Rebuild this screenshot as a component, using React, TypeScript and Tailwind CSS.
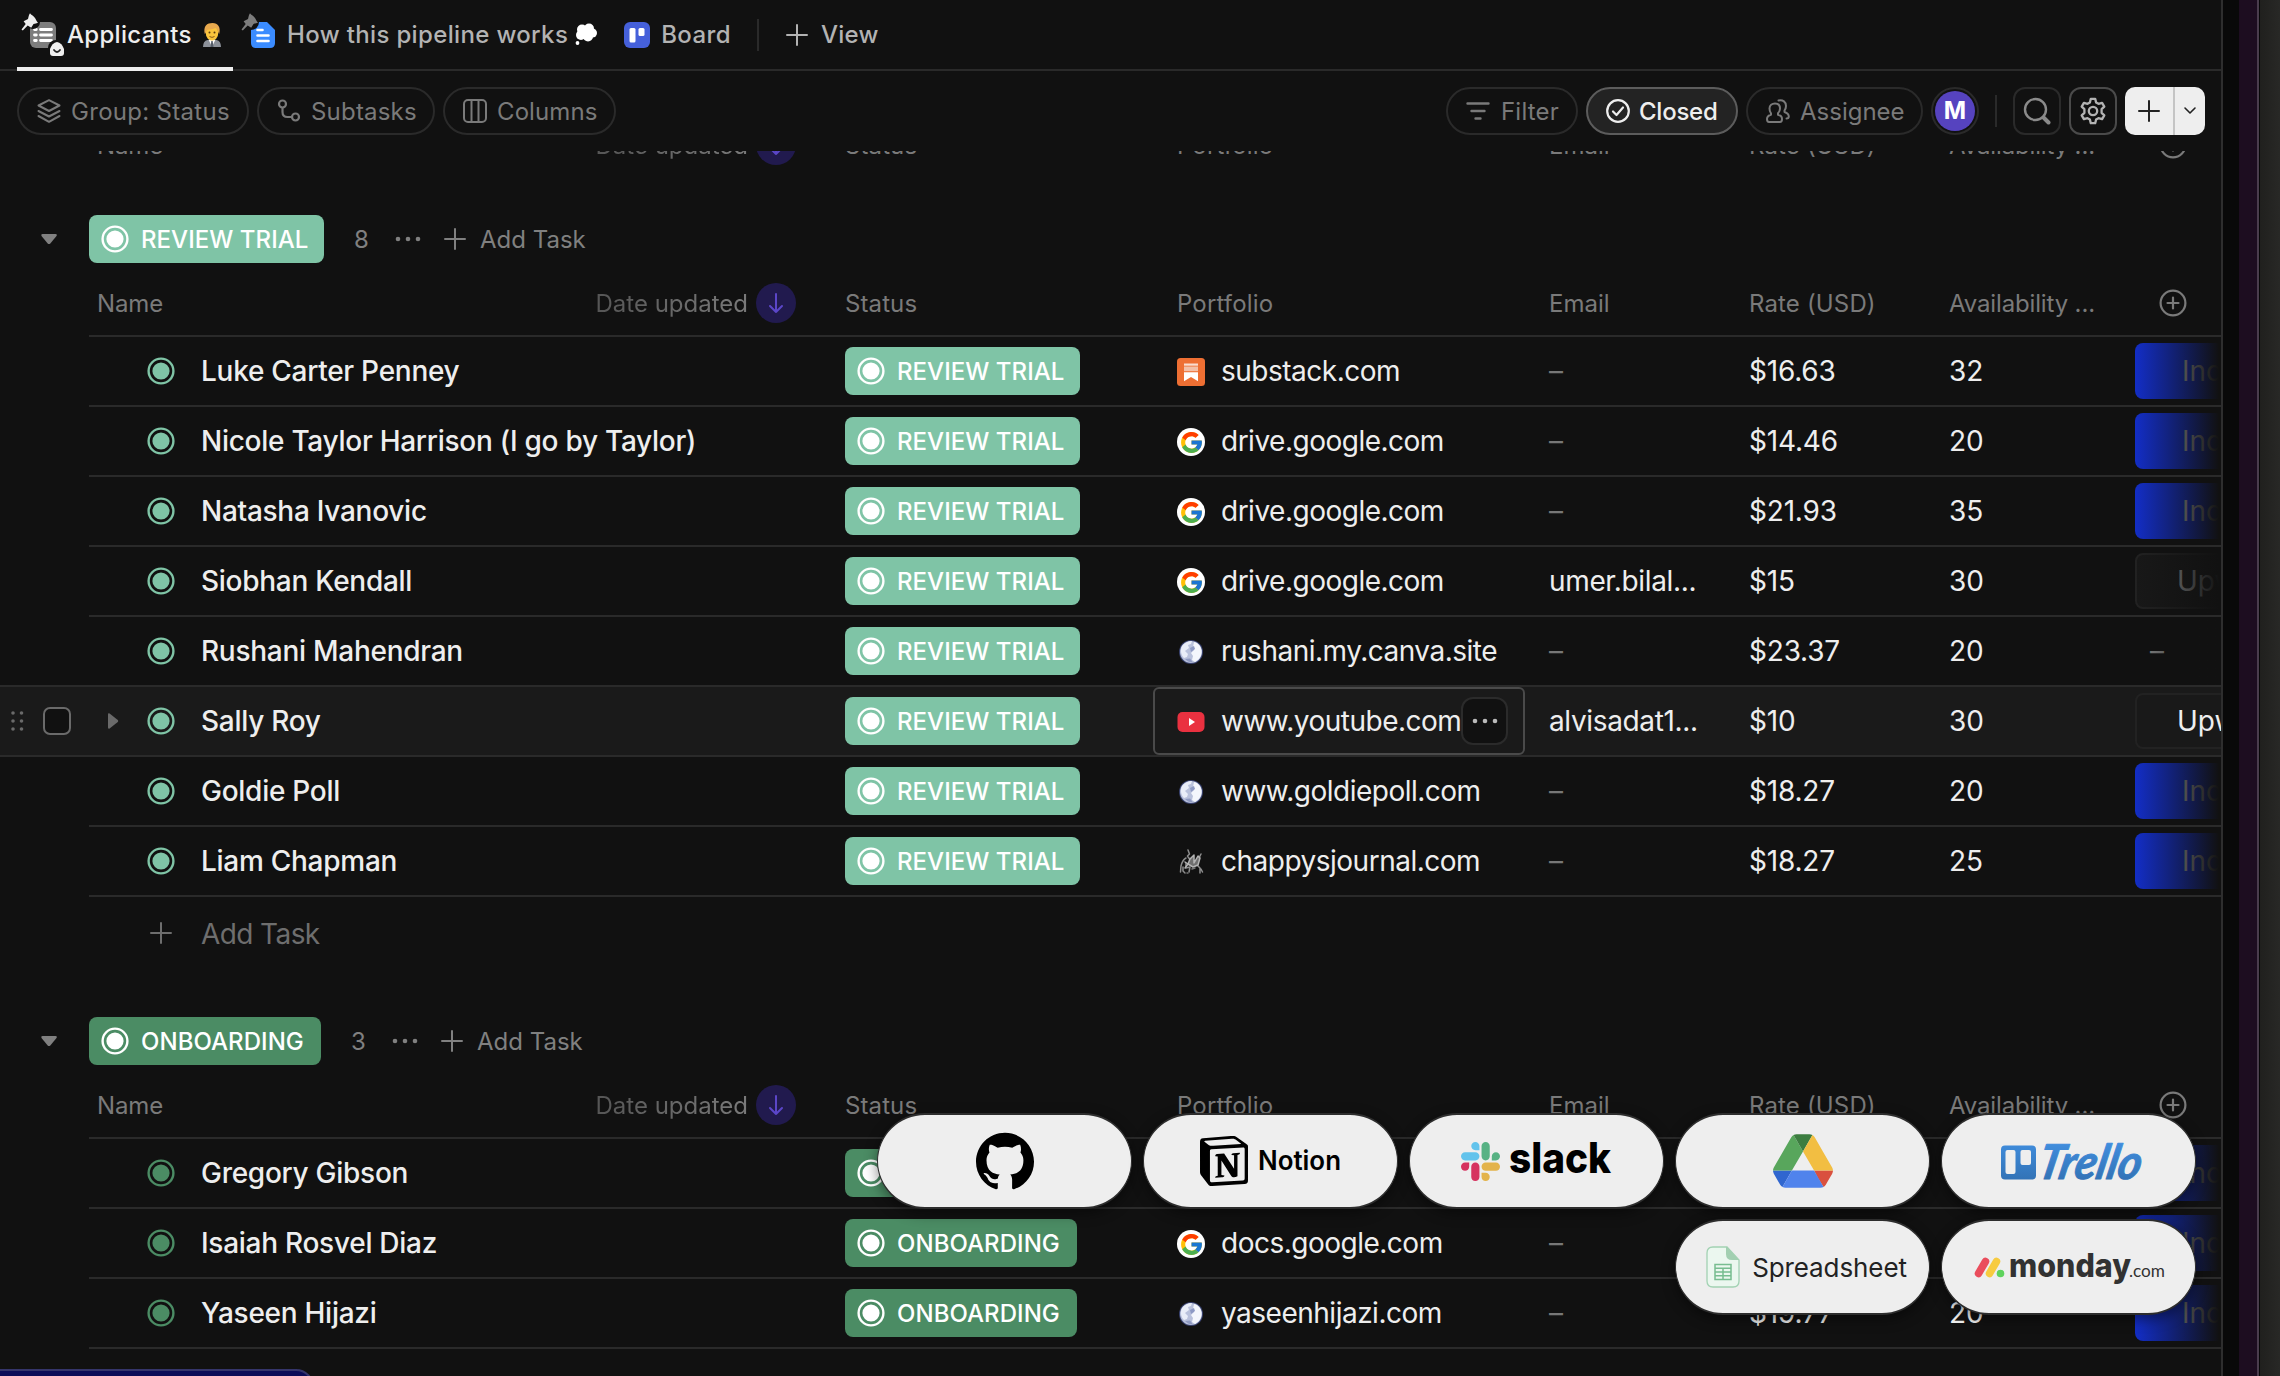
import React from "react";
import { FcGoogle } from "react-icons/fc";
import { SiGithub, SiNotion } from "react-icons/si";

const StatusDot = ({ className = "" }: { className?: string }) => (
  <svg viewBox="0 0 28 28" className={"size-7 shrink-0 " + className}>
    <circle cx="14" cy="14" r="12.4" fill="none" stroke="currentColor" strokeWidth="2.4" />
    <circle cx="14" cy="14" r="8.6" fill="currentColor" />
  </svg>
);

const Plus = ({ className = "" }: { className?: string }) => (
  <svg viewBox="0 0 24 24" className={"size-6 shrink-0 " + className} fill="none" stroke="currentColor" strokeWidth="2" strokeLinecap="round">
    <path d="M12 2v20M2 12h20" />
  </svg>
);

const Dots = ({ className = "" }: { className?: string }) => (
  <svg viewBox="0 0 26 8" className={"h-2 w-[26px] shrink-0 " + className} fill="currentColor">
    <circle cx="3" cy="4" r="2.3" />
    <circle cx="13" cy="4" r="2.3" />
    <circle cx="23" cy="4" r="2.3" />
  </svg>
);

const Pin = ({ className = "" }: { className?: string }) => (
  <svg viewBox="0 0 18 18" className={"absolute size-[18px] " + className} fill="currentColor">
    <path d="M9 0.3c1.2 1.8 3.2 2.4 4.6 4.1s1.800 3.600 3.400 5.300c-1.400.6-3 .7-4.500 1.300L10.200 14.800 6.700 12.600 1.800 17.600 0.500 16.500 4.700 11.100 2.600 8.200 7 5.900C7.500 4.200 7.800 2 9 .3Z" />
  </svg>
);

function Globe() {
  return (
    <svg viewBox="0 0 28 28" className="size-7">
      <circle cx="14" cy="14" r="12" fill="#39426f" />
      <circle cx="14" cy="14" r="11" fill="#b9c1dc" />
      <path d="M5 8c2-3 6-5 10-5l-1 3-3 1 1 3-4 3 3 3-1 3-3 1C4 17 3 12 5 8Z" fill="#e9edf8" />
      <path d="M17 4c4 1 7 4 7.500 8.500.2 3-.5 6-2.500 8.500l-4 3-3-2 1-4-2-3 3-3-1-3Z" fill="#f4f6fc" />
      <path d="M8 21c2 2.500 5 3.500 8 3.500l-3-4Z" fill="#8f9ac2" />
      <path d="M13 10l4-2 1 3-4 3Z" fill="#8d99c4" />
    </svg>
  );
}

function Favicon({ kind }: { kind: string }) {
  if (kind === "google")
    return (
      <span className="flex size-7 items-center justify-center rounded-full bg-white">
        <FcGoogle size={25} />
      </span>
    );
  if (kind === "substack")
    return (
      <svg viewBox="0 0 28 28" className="size-7">
        <rect width="28" height="28" rx="3.500" fill="#ee6f33" />
        <path d="M7 5.500h14v2.200H7z" fill="#f9ddd0" />
        <path d="M7 8.500h14v4.700H7z" fill="#f3c0a8" />
        <path d="M7 14.200h14v9L14 19l-7 4.200z" fill="#fff" />
      </svg>
    );
  if (kind === "youtube")
    return (
      <svg viewBox="0 0 28 28" className="size-7">
        <rect x="0.500" y="4" width="27" height="20" rx="5" fill="#ea3140" />
        <path d="M12 10l6 4-6 4z" fill="#fff" />
      </svg>
    );
  if (kind === "figure")
    return (
      <svg viewBox="0 0 28 28" className="size-7" fill="none" stroke="#8d8d8d" strokeWidth="1.500" strokeLinecap="round" strokeLinejoin="round">
        <path d="M11 2l1.500 4-2 2 2 3M9 10c-2 1-4 4-5 8l-.5 6M24 6l-2 4M6 19v4l2 2M9 20l4-1-1 5M20 17l3 3v5M24 21l1.500 3" />
        <path d="M13 11l4-4v8l4-7 2 2-2 7-5 2-5-3ZM8 14l3 2-3 4" fill="#6f6f6f" stroke="#b4b4b4" />
        <path d="M15 21l3-1M10 25h1" stroke="#777" />
      </svg>
    );
  return <Globe />;
}

type Row = {
  name: string;
  icon?: string;
  site?: string;
  email?: string;
  rate: string;
  hours: string;
  source: "Ind" | "Upw" | "";
  hover?: boolean;
  fullLine?: boolean;
};

const reviewRows: Row[] = [
  { name: "Luke Carter Penney", icon: "substack", site: "substack.com", rate: "$16.63", hours: "32", source: "Ind" },
  { name: "Nicole Taylor Harrison (I go by Taylor)", icon: "google", site: "drive.google.com", rate: "$14.46", hours: "20", source: "Ind" },
  { name: "Natasha Ivanovic", icon: "google", site: "drive.google.com", rate: "$21.93", hours: "35", source: "Ind" },
  { name: "Siobhan Kendall", icon: "google", site: "drive.google.com", email: "umer.bilal...", rate: "$15", hours: "30", source: "Upw" },
  { name: "Rushani Mahendran", icon: "globe", site: "rushani.my.canva.site", rate: "$23.37", hours: "20", source: "", fullLine: true },
  { name: "Sally Roy", icon: "youtube", site: "www.youtube.com", email: "alvisadat1...", rate: "$10", hours: "30", source: "Upw", hover: true, fullLine: true },
  { name: "Goldie Poll", icon: "globe", site: "www.goldiepoll.com", rate: "$18.27", hours: "20", source: "Ind" },
  { name: "Liam Chapman", icon: "figure", site: "chappysjournal.com", rate: "$18.27", hours: "25", source: "Ind" },
];

const onboardingRows: Row[] = [
  { name: "Gregory Gibson", rate: "", hours: "", source: "Ind" },
  { name: "Isaiah Rosvel Diaz", icon: "google", site: "docs.google.com", rate: "", hours: "", source: "Ind" },
  { name: "Yaseen Hijazi", icon: "globe", site: "yaseenhijazi.com", rate: "$19.77", hours: "20", source: "Ind" },
];

const tones = {
  review: { label: "REVIEW TRIAL", bg: "bg-[#7fc4a6]", text: "text-[#7fc4a6]", width: "w-[235px]", track: "tracking-[0.05px]" },
  onboarding: { label: "ONBOARDING", bg: "bg-[#4b8c64]", text: "text-[#4b8c64]", width: "w-[232px]", track: "tracking-[0.05px]" },
};
type Tone = keyof typeof tones;

const Badge = ({ tone }: { tone: Tone }) => {
  const t = tones[tone];
  return (
    <div className={`flex h-12 shrink-0 items-center rounded-lg pl-3 text-white ${t.bg} ${t.width}`}>
      <StatusDot />
      <span className={`ml-3 pt-0.5 text-2xl font-medium whitespace-nowrap ${t.track}`}>{t.label}</span>
    </div>
  );
};

const ColumnHeader = () => (
  <div className="ml-[89px] flex h-16 items-center text-2xl leading-[34px] text-[#7a7a7a]">
    <div className="flex w-[756px] items-center pr-[49px] pl-2">
      <span className="pt-0.5 tracking-[-0.1px]">Name</span>
      <span className="ml-auto bg-gradient-to-r from-[#555] to-[#7a7a7a] bg-clip-text pt-0.5 text-transparent">Date updated</span>
      <span className="ml-2 flex size-10 items-center justify-center rounded-full bg-[#211a4e]">
        <svg viewBox="0 0 20 24" className="h-6 w-5" fill="none" stroke="#5b46c8" strokeWidth="2" strokeLinecap="round" strokeLinejoin="round">
          <path d="M10 3v18M4 15l6 6 6-6" />
        </svg>
      </span>
    </div>
    <span className="w-[332px] pt-0.5 tracking-[0.1px]">Status</span>
    <span className="w-[372px] pt-0.5 tracking-[0.15px]">Portfolio</span>
    <span className="w-[200px] pt-0.5">Email</span>
    <span className="w-[200px] pt-0.5 tracking-[0.15px]">Rate (USD)</span>
    <span className="w-[210px] pt-0.5 tracking-[-0.15px] whitespace-nowrap">Availability ...</span>
    <svg viewBox="0 0 28 28" className="size-7" fill="none" stroke="#7a7a7a" strokeWidth="2.200" strokeLinecap="round">
      <circle cx="14" cy="14" r="12.400" />
      <path d="M14 8.500v11M8.500 14h11" />
    </svg>
  </div>
);

const Source = ({ row }: { row: Row }) => (
  <div className="relative flex h-full w-24 items-center overflow-hidden pl-2.5">
    {row.source === "Ind" && <div className="h-14 w-40 shrink-0 rounded-lg bg-[#1331dc] pl-[47px] text-[28px] leading-14 text-[#b9b9b9]">Ind</div>}
    {row.source === "Upw" && (
      <div className={`h-14 w-40 shrink-0 rounded-lg border-2 bg-[#191919] pl-10 text-[28px] leading-[52px] ${row.hover ? "border-[#222] text-[#eee]" : "border-[#242424] text-[#aaa]"}`}>Upw</div>
    )}
    {row.source === "" && <span className="pl-[15px] text-[#999]">–</span>}
    {!row.hover && <div className="absolute inset-y-0 right-0 left-0 bg-gradient-to-r from-transparent to-[#111] to-98%" />}
  </div>
);

const TaskRow = ({ row, tone }: { row: Row; tone: Tone }) => (
  <div className={`h-[70px] ${row.fullLine ? "" : "pl-[89px]"} ${row.hover ? "bg-[#1a1a1a]" : ""}`}>
    <div className="flex h-full items-center border-b-2 border-[#2a2a2a] text-[28px] text-[#eeeeee]">
      {row.fullLine && (
        <div className="flex w-[89px] shrink-0 items-center pl-[11px]">
          {row.hover && (
            <>
              <svg viewBox="0 0 14 22" className="h-[22px] w-3.5" fill="#6a6a6a">
                {[3, 11, 19].map((y) => (
                  <g key={y}>
                    <circle cx="2" cy={y} r="1.800" />
                    <circle cx="10.500" cy={y} r="1.800" />
                  </g>
                ))}
              </svg>
              <span className="ml-[18px] size-7 rounded-[7px] border-2 border-[#6a6a6a] bg-[#111]" />
            </>
          )}
        </div>
      )}
      <div className="flex w-[756px] shrink-0 items-center">
        <div className="flex w-[58px] items-center pl-[18px]">
          {row.hover && (
            <svg viewBox="0 0 12 18" className="h-[18px] w-3" fill="#6a6a6a">
              <path d="M1 2.500Q1 .8 2.600 1.600L10.800 8q.9 1 0 2l-8.200 6.400Q1 17.200 1 15.500Z" />
            </svg>
          )}
        </div>
        <StatusDot className={tones[tone].text} />
        <span className="ml-[26px] font-medium tracking-[-0.27px] whitespace-nowrap">{row.name}</span>
      </div>
      <div className="w-[308px] shrink-0">
        <Badge tone={tone} />
      </div>
      <div className={`flex h-[68px] w-[372px] shrink-0 items-center rounded-md border-2 pl-[22px] ${row.hover ? "border-[#4a4a4a]" : "border-transparent"}`}>
        {row.site && (
          <>
            <span className="mt-0.5 shrink-0">
              <Favicon kind={row.icon ?? "globe"} />
            </span>
            <span className="ml-4 tracking-[-0.5px] whitespace-nowrap">{row.site}</span>
          </>
        )}
        {row.hover && (
          <span className="mr-[15px] ml-auto flex h-12 w-[47px] shrink-0 items-center justify-center rounded-xl border-2 border-[#2b2b2b] bg-[#111] text-[#bbb]">
            <Dots />
          </span>
        )}
      </div>
      <div className="w-[200px] shrink-0 pl-6 tracking-[-0.35px]">{row.email ?? <span className="text-[#777]">–</span>}</div>
      <div className="w-[200px] shrink-0 pl-6 tracking-[-0.2px]">{row.rate}</div>
      <div className="w-[200px] shrink-0 pl-6">{row.hours}</div>
      <Source row={row} />
    </div>
  </div>
);

const Group = ({ tone, rows, count }: { tone: Tone; rows: Row[]; count: string }) => (
  <section>
    <div className="flex h-12 items-center pl-10 text-2xl text-[#808080]">
      <svg viewBox="0 0 18 12" className="mr-[31px] h-3 w-[18px]" fill="#808080">
        <path d="M2.500 1h13q2 .2 1 2L10.300 10.500q-1.300 1-2.600 0L1.500 3Q.6 1.200 2.500 1Z" />
      </svg>
      <Badge tone={tone} />
      <span className="ml-[30px] w-4 pt-0.5">{count}</span>
      <Dots className="ml-[25px]" />
      <Plus className="ml-[22px]" />
      <span className="ml-[13px] pt-0.5">Add Task</span>
    </div>
    <div className="mt-2">
      <ColumnHeader />
    </div>
    <div className="ml-[89px] h-0.5 bg-[#2a2a2a]" />
    {rows.map((r) => (
      <TaskRow key={r.name} row={r} tone={tone} />
    ))}
  </section>
);

const Chip = ({ children, className }: { children: React.ReactNode; className: string }) => (
  <div className={`flex h-12 shrink-0 items-center rounded-full border-2 text-2xl whitespace-nowrap ${className}`}>{children}</div>
);

const Logo = ({ children }: { children: React.ReactNode }) => (
  <div className="flex h-24 w-[255px] items-center justify-center rounded-full border border-y-2 border-[#2d2d2d] bg-[#eeeeee] shadow-[0_4px_14px_rgba(0,0,0,0.450)]">{children}</div>
);

const TabBar = () => (
  <nav className="flex h-[71px] shrink-0 items-center border-b-2 border-[#2a2a2a] text-2xl font-medium tracking-[0.3px] text-[#b3b3b3]">
    <div className="relative ml-[17px] flex h-full w-[216px] items-center pl-[13px] text-[#eeeeee]">
      <span className="absolute inset-x-0 -bottom-0.5 h-1 bg-[#eeeeee]" />
      <span className="relative flex h-[26px] w-[26px] shrink-0">
        <svg viewBox="0 0 26 26" className="size-[26px]">
          <rect width="26" height="26" rx="6" fill="#7d7d7d" />
          <path d="M10.500 7.500h11M10.500 13h11M10.500 18.500h11M4.500 7.500h1.800M4.500 13h1.800M4.500 18.500h1.800" stroke="#fff" strokeWidth="2.800" strokeLinecap="round" />
          <circle cx="3" cy="0" r="7" fill="#111" />
          <circle cx="26" cy="26" r="8" fill="#111" />
        </svg>
        <Pin className="-top-[9px] -left-[9px] text-[#eee]" />
        <svg viewBox="0 0 14 14" className="absolute top-5 left-5 size-3.5">
          <path d="M7 0q5 1 7 7v4q0 3-3 3H3q-3 0-3-3V7q2-6 7-7Z" fill="#eee" />
          <path d="M4 8q3 4 6 0" stroke="#222" strokeWidth="1.800" fill="none" strokeLinecap="round" />
        </svg>
      </span>
      <span className="ml-[11px]">Applicants</span>
      <svg viewBox="0 0 18 24" className="mr-[12px] ml-auto h-6 w-[18px]">
        <path d="M0 24q0-6 4.500-7h9q4.500 1 4.500 7Z" fill="#8c9199" />
        <path d="M5.500 16.500 9 24l3.500-7.500Z" fill="#fff" />
        <path d="M8.300 18h1.400l.8 6H7.500Z" fill="#555d68" />
        <ellipse cx="9" cy="9.500" rx="6.300" ry="8" fill="#fbc53c" />
        <path d="M1.800 11C0 3 4 0 9.500 0S18 4 16.200 11C15 9 15 6.500 12.500 5 9 7 5 6 3.600 7.500 3 9 3 10 1.800 11Z" fill="#e8a94e" />
        <circle cx="6.500" cy="9.500" r="1" fill="#5b3c12" />
        <circle cx="11.500" cy="9.500" r="1" fill="#5b3c12" />
        <path d="M6.500 13.500q2.500 1.800 5 0" stroke="#8a5a14" strokeWidth="1" fill="none" />
      </svg>
    </div>
    <div className="flex items-center pl-[18px]">
      <span className="relative flex h-[26px] w-6">
        <svg viewBox="0 0 24 26" className="h-[26px] w-6">
          <path d="M5 0h11l8 8v13q0 5-5 5H5q-5 0-5-5V5q0-5 5-5Z" fill="#3b8cff" />
          <path d="M6.500 8h5M6.500 13.500h11M6.500 19h11" stroke="#fff" strokeWidth="2.600" strokeLinecap="round" />
          <circle cx="0" cy="0" r="8" fill="#111" />
        </svg>
        <Pin className="-top-[9px] -left-[10px] text-[#7d7d7d]" />
      </span>
      <span className="ml-3 tracking-[0.35px] whitespace-nowrap">How this pipeline works</span>
      <svg viewBox="0 0 24 24" className="ml-1.5 size-6" fill="#fff">
        <circle cx="8" cy="6.500" r="5" />
        <circle cx="15" cy="5.500" r="5" />
        <circle cx="18.500" cy="10" r="4.500" />
        <circle cx="7" cy="12" r="5" />
        <circle cx="14" cy="13.500" r="5" />
        <circle cx="12" cy="9" r="5" />
        <circle cx="3.500" cy="20" r="1.900" />
      </svg>
    </div>
    <div className="ml-[26px] flex items-center">
      <svg viewBox="0 0 26 26" className="size-[26px]">
        <rect width="26" height="26" rx="6" fill="#4560da" />
        <rect x="5.500" y="6" width="6" height="14.500" rx="1.500" fill="#fff" />
        <rect x="14.500" y="6" width="6" height="8" rx="1.500" fill="#fff" />
      </svg>
      <span className="ml-[11px] tracking-[0.4px]">Board</span>
    </div>
    <span className="ml-[26px] h-8 w-0.5 bg-[#2a2a2a]" />
    <Plus className="ml-[26px]" />
    <span className="ml-3">View</span>
  </nav>
);

const Toolbar = () => (
  <div className="flex h-20 shrink-0 items-start pt-4 text-[#7a7a7a]">
    <Chip className="ml-[17px] w-[232px] border-[#2a2a2a] pl-[18px]">
      <svg viewBox="0 0 24 24" className="size-6" fill="none" stroke="currentColor" strokeWidth="2" strokeLinejoin="round" strokeLinecap="round">
        <path d="M12 1.200 22.500 6.500 12 12 1.500 6.500ZM1.500 12 12 17.500 22.500 12M1.500 17 12 22.800 22.500 17" />
      </svg>
      <span className="ml-2.5 pt-0.5 tracking-[0.3px]">Group: Status</span>
    </Chip>
    <Chip className="ml-2 w-[178px] border-[#2a2a2a] pl-[18px]">
      <svg viewBox="0 0 24 24" className="size-6" fill="none" stroke="currentColor" strokeWidth="2.200">
        <circle cx="5.500" cy="5" r="3.500" />
        <circle cx="18.500" cy="18" r="3.500" />
        <path d="M5.500 8.500V13q0 5 5 5H15" />
      </svg>
      <span className="ml-2.5 pt-0.5 tracking-[0.2px]">Subtasks</span>
    </Chip>
    <Chip className="ml-2 w-[173px] border-[#2a2a2a] pl-[18px]">
      <svg viewBox="0 0 24 24" className="size-6" fill="none" stroke="currentColor" strokeWidth="2">
        <rect x="1" y="1" width="22" height="22" rx="4" />
        <path d="M8.500 1v22M15.500 1v22" />
      </svg>
      <span className="ml-2.5 pt-0.5 tracking-[0.1px]">Columns</span>
    </Chip>
    <Chip className="ml-auto w-[132px] border-[#2a2a2a] pl-[18px]">
      <svg viewBox="0 0 24 24" className="size-6" fill="none" stroke="currentColor" strokeWidth="2.400" strokeLinecap="round">
        <path d="M1.500 4.500h21M5.500 12h13M9.500 19.500h5" />
      </svg>
      <span className="ml-[11px] pt-0.5 tracking-[0.2px]">Filter</span>
    </Chip>
    <Chip className="ml-2 w-[152px] border-[#5c5c5c] bg-[#232323] pl-[18px] font-medium text-[#eee]">
      <svg viewBox="0 0 24 24" className="size-6" fill="none" stroke="currentColor" strokeWidth="2.200" strokeLinecap="round" strokeLinejoin="round">
        <circle cx="12" cy="12" r="10.800" />
        <path d="m7 12.500 3.500 3.500L17 8.500" />
      </svg>
      <span className="ml-[9px] pt-0.5 tracking-[-0.25px]">Closed</span>
    </Chip>
    <Chip className="ml-2 w-[177px] border-[#2a2a2a] pl-[18px]">
      <svg viewBox="0 0 24 24" className="size-6" fill="none" stroke="currentColor" strokeWidth="2" strokeLinecap="round" strokeLinejoin="round">
        <path d="M9 4.500c3 0 5 2 5 5 0 2-.8 3.600-2 4.800v1.500c2.500.6 4 1.700 4 4.200q0 3-2 3H3q-2 0-2-3c0-2.500 2-3.600 4-4.200v-1.500C4 13 3.500 11.500 3.500 9.500c0-3 2.500-5 5.500-5Z" />
        <path d="M12.500 1.500C17 .5 20 3 20 7c0 2-.5 3-1.500 4.500v1.500c2.500.8 4.300 1.800 4.300 4.500 0 1.500-.8 2-2.300 2" />
      </svg>
      <span className="ml-2.5 pt-0.5">Assignee</span>
    </Chip>
    <span className="ml-2 flex size-12 items-center justify-center rounded-full border-2 border-[#2a2a2a]">
      <span className="flex size-10 shrink-0 items-center justify-center rounded-full bg-[#5643bf] text-2xl font-bold text-white">M</span>
    </span>
    <span className="mt-2 ml-4 h-8 w-0.5 bg-[#2a2a2a]" />
    <span className="ml-4 flex size-12 items-center justify-center rounded-xl border-2 border-[#2a2a2a]">
      <svg viewBox="0 0 28 28" className="size-7" fill="none" stroke="#8a8a8a" strokeWidth="2.400" strokeLinecap="round">
        <circle cx="12.500" cy="12.500" r="10.500" />
        <path d="m20.500 20.500 5 5" strokeWidth="4" />
      </svg>
    </span>
    <span className="ml-2 flex size-12 items-center justify-center rounded-xl border-2 border-[#4a4a4a]">
      <svg viewBox="0 0 28 28" className="size-7" fill="none" stroke="#b3b3b3" strokeWidth="2.300" strokeLinejoin="round">
        <circle cx="14" cy="14" r="4.200" />
        <path d="M11.800 1.800h4.400l.9 3.600 2.400 1.400 3.600-1 2.200 3.800-2.700 2.600v3.600l2.700 2.600-2.200 3.800-3.600-1-2.400 1.400-.9 3.600h-4.400l-.9-3.600-2.400-1.400-3.600 1-2.200-3.800 2.700-2.600v-3.600L2.700 9.600l2.200-3.800 3.600 1 2.400-1.400Z" />
      </svg>
    </span>
    <span className="mr-4 ml-2 flex h-12 w-20 items-center overflow-hidden rounded-[10px] bg-[#eee] text-[#222]">
      <span className="flex h-full w-[50px] items-center justify-center border-r-2 border-[#c4c4c4]">
        <Plus />
      </span>
      <svg viewBox="0 0 14 10" className="ml-2 h-2.5 w-3.5" fill="none" stroke="currentColor" strokeWidth="1.600" strokeLinecap="round" strokeLinejoin="round">
        <path d="m2 2 5 5 5-5" />
      </svg>
    </span>
  </div>
);

const Logos = () => (
  <div className="absolute top-[1113px] left-[877px] grid grid-cols-[repeat(5,255px)] gap-x-[11px] gap-y-2.5">
    <Logo>
      <SiGithub size={58} color="#000" />
    </Logo>
    <Logo>
      <SiNotion size={50} color="#000" />
      <svg className="ml-2 h-12 w-[86px]">
        <text x="1" y="33" textLength="83" lengthAdjust="spacingAndGlyphs" fontSize="26.500" fontWeight="600" fontFamily="Inter, sans-serif">Notion</text>
      </svg>
    </Logo>
    <Logo>
      <svg viewBox="0 0 122.800 122.800" className="size-[39px]">
        <path d="M25.800 77.600c0 7.100-5.800 12.900-12.900 12.900S0 84.700 0 77.600s5.800-12.900 12.900-12.900h12.900v12.900zm6.500 0c0-7.100 5.800-12.900 12.900-12.900s12.900 5.800 12.900 12.900v32.300c0 7.100-5.800 12.900-12.900 12.900s-12.900-5.800-12.900-12.900V77.600z" fill="#d6335f" />
        <path d="M45.200 25.800c-7.100 0-12.900-5.800-12.900-12.900S38.100 0 45.200 0s12.900 5.800 12.900 12.900v12.900H45.200zm0 6.500c7.100 0 12.900 5.800 12.900 12.900s-5.800 12.900-12.900 12.900H12.900C5.800 58.100 0 52.300 0 45.200s5.800-12.900 12.900-12.900h32.300z" fill="#62c3ec" />
        <path d="M97 45.200c0-7.100 5.800-12.900 12.900-12.900s12.900 5.800 12.900 12.900-5.800 12.900-12.900 12.900H97V45.200zm-6.500 0c0 7.100-5.800 12.900-12.900 12.900s-12.900-5.800-12.900-12.900V12.900C64.700 5.800 70.500 0 77.600 0s12.900 5.800 12.900 12.900v32.300z" fill="#57b284" />
        <path d="M77.600 97c7.100 0 12.900 5.800 12.900 12.900s-5.800 12.900-12.900 12.900-12.900-5.800-12.900-12.900V97h12.900zm0-6.500c-7.100 0-12.900-5.800-12.900-12.900s5.800-12.900 12.900-12.900h32.300c7.100 0 12.900 5.800 12.900 12.900s-5.800 12.900-12.900 12.900H77.600z" fill="#e3b34b" />
      </svg>
      <svg className="ml-2 h-14 w-[104px]">
        <text x="1" y="39.500" textLength="102" lengthAdjust="spacingAndGlyphs" fontSize="42" fontWeight="800" fontFamily="Inter, sans-serif">slack</text>
      </svg>
    </Logo>
    <Logo>
      <svg viewBox="0 0 87.300 78" className="h-[54px] w-[60px]">
        <path d="m6.600 66.850 3.850 6.650c.8 1.400 1.950 2.500 3.300 3.300l13.750-23.800h-27.500c0 1.550.4 3.100 1.200 4.500z" fill="#3066cf" />
        <path d="m43.650 25-13.750-23.800c-1.350.8-2.500 1.900-3.300 3.300l-25.400 44a9.060 9.060 0 0 0 -1.200 4.500h27.500z" fill="#58a65c" />
        <path d="m73.550 76.800c1.350-.8 2.500-1.900 3.300-3.300l1.600-2.750 7.650-13.250c.8-1.400 1.200-2.950 1.200-4.500h-27.502l5.852 11.500z" fill="#d9503f" />
        <path d="m43.650 25 13.750-23.800c-1.350-.8-2.900-1.200-4.500-1.200h-18.500c-1.600 0-3.150.45-4.500 1.200z" fill="#3c7d40" />
        <path d="m59.800 53h-32.300l-13.750 23.800c1.350.8 2.900 1.200 4.500 1.200h50.800c1.600 0 3.150-.45 4.500-1.200z" fill="#5083ec" />
        <path d="m73.400 26.500-12.700-22c-.8-1.400-1.950-2.500-3.300-3.300l-13.750 23.800 16.150 28h27.450c0-1.550-.4-3.100-1.200-4.500z" fill="#f2be42" />
      </svg>
    </Logo>
    <Logo>
      <svg viewBox="0 0 152 56" className="ml-[9px] h-14 w-[152px]">
        <defs>
          <linearGradient id="trello" gradientUnits="userSpaceOnUse" x1="0" y1="6" x2="0" y2="48">
            <stop stopColor="#418fe0" />
            <stop offset="1" stopColor="#3272b5" />
          </linearGradient>
          <linearGradient id="trelloText" gradientUnits="userSpaceOnUse" x1="0" y1="-38" x2="0" y2="2">
            <stop stopColor="#418fe0" />
            <stop offset="1" stopColor="#3272b5" />
          </linearGradient>
        </defs>
        <path fillRule="evenodd" fill="url(#trello)" d="M8 12.500h27q4 0 4 4v26q0 4-4 4H8q-4 0-4-4V16.500q0-4 4-4ZM10.500 17q-2 0-2 2v20q0 2 2 2h6q2 0 2-2v-20q0-2-2-2ZM25.500 17q-2 0-2 2v11q0 2 2 2h6.500q2 0 2-2v-11q0-2-2-2Z" />
        <text transform="translate(39 46) skewX(-12)" textLength="103" lengthAdjust="spacingAndGlyphs" fontSize="48" fontWeight="700" fontStyle="italic" fontFamily="Lato, sans-serif" fill="url(#trelloText)" stroke="url(#trelloText)" strokeWidth="1" strokeLinejoin="round">Trello</text>
      </svg>
    </Logo>
    <div className="col-start-4">
      <Logo>
        <svg viewBox="0 0 34 42" className="ml-2 h-[42px] w-[34px]">
          <path d="M7 1h14l12 13v21q0 6-6 6H7q-6 0-6-6V7q0-6 6-6Z" fill="#ebf7ef" stroke="#a2d2b3" strokeWidth="1.300" />
          <path d="M20 1h1l12 13h-7q-6 0-6-6Z" fill="#a2cfb1" />
          <path d="M9 18.500h16v15H9ZM9 22.300h16M9 26h16M9 29.800h16M17 22v11.500" fill="none" stroke="#77bd90" strokeWidth="1.500" />
        </svg>
        <span className="ml-3 text-[26px] tracking-[-0.1px] text-[#222]">Spreadsheet</span>
      </Logo>
    </div>
    <Logo>
      <svg viewBox="0 0 196 50" className="h-[50px] w-[196px]">
        <path d="m7.500 31.500 7-12" stroke="#ea4d5c" strokeWidth="7.500" strokeLinecap="round" />
        <path d="m18.500 31.500 7-12" stroke="#f7cb3f" strokeWidth="7.500" strokeLinecap="round" />
        <circle cx="29.500" cy="31.500" r="3.800" fill="#5fd35d" />
        <text x="38" y="34.500" textLength="122" lengthAdjust="spacingAndGlyphs" fontSize="32.500" fontWeight="800" fill="#323232" fontFamily="Inter, sans-serif">monday</text>
        <text x="158" y="34.500" textLength="36" lengthAdjust="spacingAndGlyphs" fontSize="18" fill="#323232" fontFamily="Lato, sans-serif">.com</text>
      </svg>
    </Logo>
  </div>
);

export default function App() {
  return (
    <div className="relative flex h-[1376px] w-[2280px] overflow-hidden bg-[#090909] font-['Inter',sans-serif]">
      <main className="flex w-[2223px] shrink-0 flex-col overflow-hidden border-r-2 border-[#2e2e2e] bg-[#111111]">
        <TabBar />
        <Toolbar />
        <div className="min-h-0 grow overflow-hidden">
          <div className="-mt-[38px]">
            <ColumnHeader />
          </div>
          <div className="mt-[38px]">
            <Group tone="review" rows={reviewRows} count="8" />
          </div>
          <div className="flex h-18 items-center pl-[149px] text-[28px] tracking-[-0.6px] text-[#6e6e6e]">
            <Plus />
            <span className="ml-7 pt-0.5">Add Task</span>
          </div>
          <div className="mt-12">
            <Group tone="onboarding" rows={onboardingRows} count="3" />
          </div>
        </div>
      </main>
      <div className="ml-4 w-[18px] bg-[#1d0d20]" />
      <div className="w-0.5 bg-[#4a3d4d]" />
      <div className="w-px bg-[#080808]" />
      <div className="grow bg-gradient-to-r from-[#20201e] to-[#282826]" />
      <Logos />
      <div className="absolute top-[1369px] -left-2 h-5 w-[322px] rounded-tr-[18px] border-2 border-[#35356b] bg-[#0c0c58]" />
    </div>
  );
}
